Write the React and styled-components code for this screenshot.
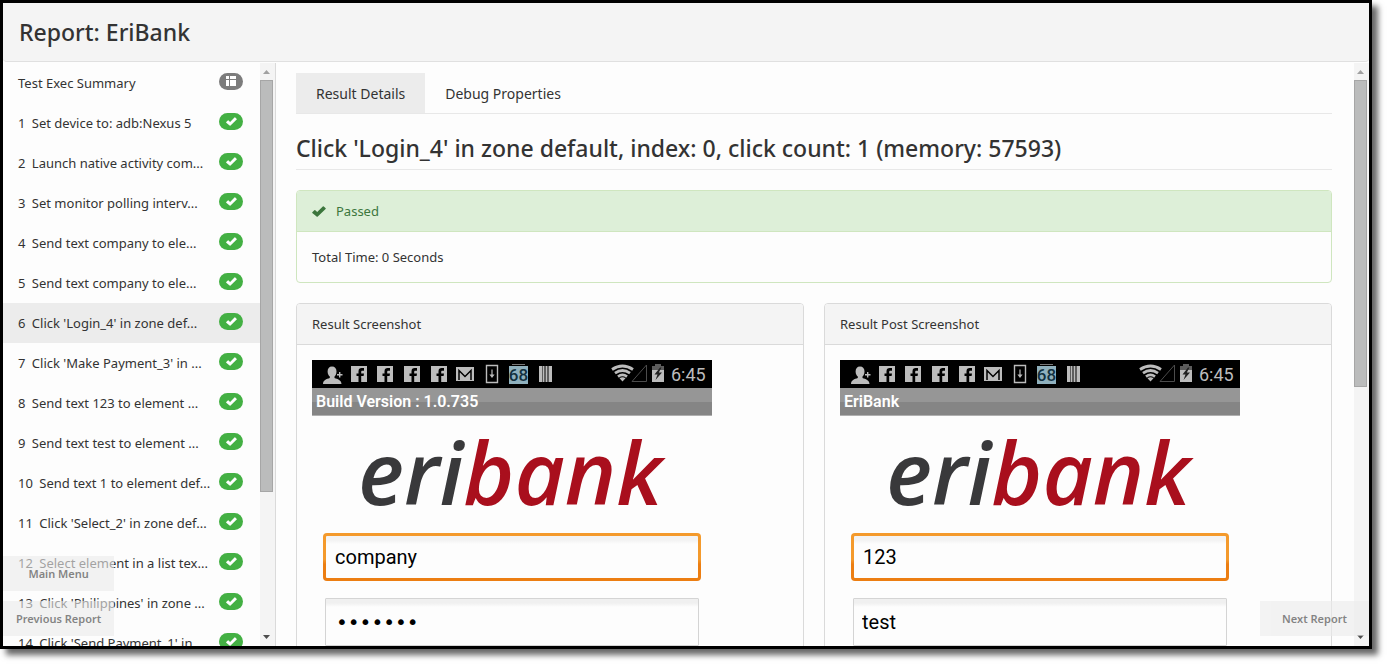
import styled, { createGlobalStyle } from "styled-components";

const colors = {
  text: "#333",
  page: "#fdfdfd",
  panel: "#f4f4f4",
  active: "#ececec",
  border: "#dadada",
  success: "#43b043",
  successText: "#3c763d",
  successBg: "#ddefd8",
  successBorder: "#cfe6bf",
  logoGray: "#39393b",
  logoRed: "#a90f1d",
  device: "#bcbcbc",
};

const steps = [
  "Set device to: adb:Nexus 5",
  "Launch native activity com...",
  "Set monitor polling interv...",
  "Send text company to ele...",
  "Send text company to ele...",
  "Click 'Login_4' in zone def...",
  "Click 'Make Payment_3' in ...",
  "Send text 123 to element ...",
  "Send text test to element ...",
  "Send text 1 to element def...",
  "Click 'Select_2' in zone def...",
  "Select element in a list tex...",
  "Click 'Philippines' in zone ...",
  "Click 'Send Payment_1' in ...",
];

const GlobalStyle = createGlobalStyle`
  * {
    box-sizing: border-box;
  }
  body {
    margin: 0;
    background: #fff;
    color: ${colors.text};
    font-family: "Noto Sans", "Open Sans", sans-serif;
    font-size: 13px;
  }
`;

const Page = styled.div`
  height: 100vh;
  padding: 0 15px 15px 0;
  overflow: hidden;
`;

const Frame = styled.div`
  position: relative;
  height: 100%;
  display: flex;
  flex-direction: column;
  overflow: hidden;
  border: 3px solid #000;
  background: ${colors.page};
  box-shadow: 6px 6px 6px rgba(0, 0, 0, 0.6);
`;

const Header = styled.header`
  flex: none;
  height: 59px;
  padding: 0 16px;
  display: flex;
  align-items: center;
  background: ${colors.panel};
  border-bottom: 1px solid #e0e0e0;
  border-radius: 0 0 4px 4px;
`;

const Title = styled.h1`
  margin: 0;
  font-size: 23px;
  font-weight: 500;
  line-height: 28px;
`;

const Body = styled.div`
  flex: 1;
  min-height: 0;
  display: flex;
  padding-top: 1px;
`;

const Sidebar = styled.nav`
  flex: none;
  width: 273px;
  display: flex;
  border-right: 1px solid ${colors.border};
`;

const StepList = styled.ul`
  flex: 1;
  min-width: 0;
  margin: 0;
  padding: 0;
  overflow: hidden;
  list-style: none;
`;

const StepLink = styled.a`
  height: 40px;
  padding: 0 17px 0 15px;
  display: flex;
  align-items: center;
  justify-content: space-between;
  color: ${colors.text};
  text-decoration: none;
  white-space: nowrap;
  background: ${(props) => (props.$active ? colors.active : "transparent")};
`;

const StepNumber = styled.span`
  margin-right: 3px;
`;

const Badge = styled.span`
  flex: none;
  width: 24px;
  height: 17px;
  margin-bottom: 3px;
  display: flex;
  align-items: center;
  justify-content: center;
  border-radius: 9px;
  background: ${(props) => (props.$summary ? "#7c7c7c" : colors.success)};
`;

const Main = styled.main`
  flex: 1;
  min-width: 0;
  display: flex;
`;

const Content = styled.div`
  flex: 1;
  min-width: 0;
  padding: 10px 22px 0 20px;
  overflow: hidden;
`;

const Track = styled.div`
  flex: none;
  width: 15px;
  display: flex;
  flex-direction: column;
  background: ${colors.panel};
`;

const ThumbArea = styled.div`
  flex: 1;
  min-height: 0;
`;

const Thumb = styled.div`
  width: 13px;
  height: ${(props) => props.$size};
  border: 1px solid #a6a6a6;
  background: #bbbcbc;
`;

const ArrowBox = styled.svg`
  flex: none;
  display: block;
  width: 13px;
  height: 17px;
`;

const Tabs = styled.div`
  display: flex;
  border-bottom: 1px solid #e8e8e8;
`;

const Tab = styled.button`
  height: 40px;
  padding: 0 20px;
  border: 0;
  font-family: "Noto Sans", "Open Sans", sans-serif;
  font-size: 14px;
  color: ${colors.text};
  background: ${(props) => (props.$active ? colors.active : "transparent")};
`;

const ResultTitle = styled.h2`
  margin: 20px 0;
  padding-bottom: 7px;
  border-bottom: 1px solid #e8e8e8;
  font-size: 23px;
  font-weight: 500;
  line-height: 28px;
  white-space: nowrap;
`;

const Panel = styled.section`
  min-width: 0;
  border: 1px solid ${(props) => (props.$success ? colors.successBorder : colors.border)};
  border-radius: 4px;
  overflow: hidden;
`;

const PanelHeader = styled.div`
  height: 41px;
  padding: 0 15px;
  display: flex;
  align-items: center;
  gap: 10px;
  border-bottom: 1px solid ${(props) => (props.$success ? colors.successBorder : colors.border)};
  color: ${(props) => (props.$success ? colors.successText : colors.text)};
  background: ${(props) => (props.$success ? colors.successBg : colors.panel)};
`;

const PanelBody = styled.div`
  padding: 15px;
  line-height: 20px;
`;

const Screenshots = styled.div`
  margin-top: 20px;
  display: grid;
  grid-template-columns: 1fr 1fr;
  gap: 20px;
`;

const Device = styled.div`
  max-width: 400px;
  font-family: Roboto, sans-serif;
`;

const StatusBar = styled.svg`
  display: block;
  width: 100%;
  background: #000;
`;

const AppBar = styled.div`
  height: 28px;
  padding: 0 4px;
  border-bottom: 1px solid #b0b0b0;
  background: linear-gradient(#969696 50%, #858585 50%);
  color: #fff;
  font-size: 16px;
  font-weight: 600;
  line-height: 27px;
`;

const Logo = styled.div`
  height: 117px;
  padding-left: 46px;
  font-family: "Open Sans", "Noto Sans", sans-serif;
  font-size: 87px;
  font-style: italic;
  font-weight: 600;
  line-height: 110px;
  color: ${colors.logoGray};
`;

const LogoAccent = styled.span`
  color: ${colors.logoRed};
`;

const Fields = styled.div`
  display: flex;
  flex-direction: column;
  gap: 17px;
  padding: 0 11px;
`;

const Field = styled.input`
  height: 48px;
  margin: ${(props) => (props.$focused ? "0" : "0 2px")};
  padding: 0 ${(props) => (props.$focused ? "9px" : "8px")};
  border: ${(props) => (props.$focused ? "3px solid transparent" : "1px solid #d4d4d4")};
  border-radius: ${(props) => (props.$focused ? "4px" : "1px")};
  outline: 0;
  font-family: Roboto, sans-serif;
  font-size: 20px;
  color: #000;
  background: ${(props) =>
    props.$focused
      ? `linear-gradient(#f3f3f3 4px, ${colors.page} 8px) padding-box, linear-gradient(#f49a2c 55%, #ec7e12 65%) border-box`
      : `linear-gradient(#f0f0f0 4px, ${colors.page} 8px)`};
  &[type="password"] {
    padding: 0 10px;
    font-family: "DejaVu Sans", sans-serif;
  }
`;

const FloatingNav = styled.div`
  position: absolute;
  bottom: 10px;
  ${(props) => props.$side}: 0;
  display: flex;
  flex-direction: column;
  gap: 10px;
`;

const FloatingButton = styled.button`
  min-width: 109px;
  height: 35px;
  padding: 0 13px;
  border: 0;
  font-family: "Noto Sans", "Open Sans", sans-serif;
  font-size: 11px;
  font-weight: 600;
  color: ${colors.text};
  background: ${colors.active};
  opacity: 0.6;
`;

function Check({ width, height, color }) {
  return (
    <svg width={width} height={height} viewBox="0 0 14 11" fill={color} aria-hidden="true">
      <path d="M0.3 6.2 2.3 4.2Q2.8 3.8 3.3 4.2L5.2 6 10.8 0.4Q11.3 0 11.8 0.4L13.7 2.2Q14 2.7 13.6 3.1L5.8 10.6Q5.2 11.1 4.6 10.6L0.3 7Q0 6.6 0.3 6.2Z" />
    </svg>
  );
}

function SummaryIcon() {
  return (
    <svg width="12" height="11" viewBox="0 0 12 11" fill="#fff" aria-hidden="true">
      <path d="M1 0h3v3H1zM5 0h6v3H5zM1 4h3v6H1zM5 4h6v6H5z" />
    </svg>
  );
}

function Scrollbar({ size }) {
  return (
    <Track aria-hidden="true">
      <ArrowBox viewBox="0 0 13 17">
        <path d="M6.5 7 10 11H3z" fill="#a0a0a0" />
      </ArrowBox>
      <ThumbArea>
        <Thumb $size={size} />
      </ThumbArea>
      <ArrowBox viewBox="0 0 13 17">
        <path d="M3 6h7L6.5 10z" fill="#4c4c4c" />
      </ArrowBox>
    </Track>
  );
}

function DeviceStatus() {
  return (
    <StatusBar viewBox="0 0 400 28" aria-label="Device status">
      <g fill={colors.device}>
        <path d="M20 6.500c3 0 4.500 2 4.500 5 0 2.500-1 4-2 5v1.500c3 1 7 2.200 7 6H11c0-3.800 3.500-5 6.800-6v-1.500c-1.200-1-2.200-2.500-2.200-5 0-3 1.500-5 4.400-5z" />
        <path d="M27 12h1.400v2H30.500v1.400h-2.100v2H27v-2h-2V14h2z" />
      </g>
      {[39, 65, 92, 119].map((x) => (
        <g key={x}>
          <rect x={x} y="6" width="16" height="16" fill={colors.device} />
          <path
            d={`M${x + 7.5} 22v-6h-2v-2.600h2v-2c0-2.200 1.200-3.300 3.200-3.300h2.300v2.600h-1.500c-1 0-1.300.4-1.300 1.200v1.500h2.800l-.4 2.600h-2.400v6z`}
            fill="#000"
          />
        </g>
      ))}
      <rect x="144" y="7" width="18" height="14" fill={colors.device} />
      <path d="M147 20V10.500l6 6 6-6V20" fill="none" stroke="#000" strokeWidth="1.500" />
      <path d="M174.500 5.500h11v17h-11z" fill="none" stroke={colors.device} strokeWidth="1.400" />
      <path d="M179.400 9.500h1.200v5h2l-2.600 3.500-2.600-3.500h2z" fill={colors.device} />
      <path d="M200 4.500h13" stroke="#777" />
      <rect x="197" y="6" width="19" height="18" fill="#8fb0bd" />
      <text x="206.500" y="21" textAnchor="middle" fontSize="17" fontWeight="500" fill="#12303f">
        68
      </text>
      <path d="M227 6h3v16h-3zM230.500 6h2v16h-2zM233.500 6h2v16h-2zM236.500 6h3.500v16h-3.500z" fill={colors.device} />
      <g fill="none" stroke={colors.device} strokeWidth="2.800">
        <path d="M300 9.500q10.500-7 21 0" />
        <path d="M303 13.200q7.500-5.400 15 0" />
        <path d="M306 16.600q4.500-3.400 9 0" />
      </g>
      <path d="M307.500 18.300q3-2 6 0L310.500 21.500z" fill={colors.device} />
      <path d="M334.500 5v16.500H320z" fill="none" stroke="#4c4c4c" />
      <path d="M343 4h6v2h3v4h-12V6h3z" fill="#5c5c5c" />
      <path d="M340 10h12v12h-12z" fill={colors.device} />
      <path d="M348 7.500 342.500 14.500h3l-2 5.500 6.500-7.500h-3.200l2.700-5z" fill="#222" />
      <text x="359" y="21" fontSize="18" fill={colors.device}>
        6:45
      </text>
    </StatusBar>
  );
}

function DeviceScreen({ title, label, company, type, value }) {
  return (
    <Device>
      <DeviceStatus />
      <AppBar>{title}</AppBar>
      <Logo>
        eri<LogoAccent>bank</LogoAccent>
      </Logo>
      <Fields>
        <Field $focused defaultValue={company} aria-label={`${label} first field`} />
        <Field type={type} defaultValue={value} aria-label={`${label} second field`} />
      </Fields>
    </Device>
  );
}

export default function App() {
  return (
    <Page>
      <GlobalStyle />
      <Frame>
        <Header>
          <Title>Report: EriBank</Title>
        </Header>
        <Body>
          <Sidebar>
            <StepList>
              <li>
                <StepLink href="#summary">
                  Test Exec Summary
                  <Badge $summary>
                    <SummaryIcon />
                  </Badge>
                </StepLink>
              </li>
              {steps.map((step, index) => (
                <li key={index}>
                  <StepLink href={`#step-${index + 1}`} $active={index === 5}>
                    <span>
                      <StepNumber>{index + 1}</StepNumber> {step}
                    </span>
                    <Badge>
                      <Check width={11} height={9} color="#fff" />
                    </Badge>
                  </StepLink>
                </li>
              ))}
            </StepList>
            <Scrollbar size="75%" />
          </Sidebar>
          <Main>
            <Content>
              <Tabs role="tablist">
                <Tab role="tab" aria-selected="true" $active>
                  Result Details
                </Tab>
                <Tab role="tab" aria-selected="false">
                  Debug Properties
                </Tab>
              </Tabs>
              <ResultTitle>
                Click 'Login_4' in zone default, index: 0, click count: 1 (memory: 57593)
              </ResultTitle>
              <Panel $success>
                <PanelHeader $success>
                  <Check width={14} height={11} color={colors.successText} />
                  Passed
                </PanelHeader>
                <PanelBody>Total Time: 0 Seconds</PanelBody>
              </Panel>
              <Screenshots>
                <Panel>
                  <PanelHeader>Result Screenshot</PanelHeader>
                  <PanelBody>
                    <DeviceScreen
                      title="Build Version : 1.0.735"
                      label="Result"
                      company="company"
                      type="password"
                      value="company"
                    />
                  </PanelBody>
                </Panel>
                <Panel>
                  <PanelHeader>Result Post Screenshot</PanelHeader>
                  <PanelBody>
                    <DeviceScreen
                      title="EriBank"
                      label="Result post"
                      company="123"
                      type="text"
                      value="test"
                    />
                  </PanelBody>
                </Panel>
              </Screenshots>
            </Content>
            <Scrollbar size="56%" />
          </Main>
        </Body>
        <FloatingNav $side="left">
          <FloatingButton>Main Menu</FloatingButton>
          <FloatingButton>Previous Report</FloatingButton>
        </FloatingNav>
        <FloatingNav $side="right">
          <FloatingButton>Next Report</FloatingButton>
        </FloatingNav>
      </Frame>
    </Page>
  );
}
